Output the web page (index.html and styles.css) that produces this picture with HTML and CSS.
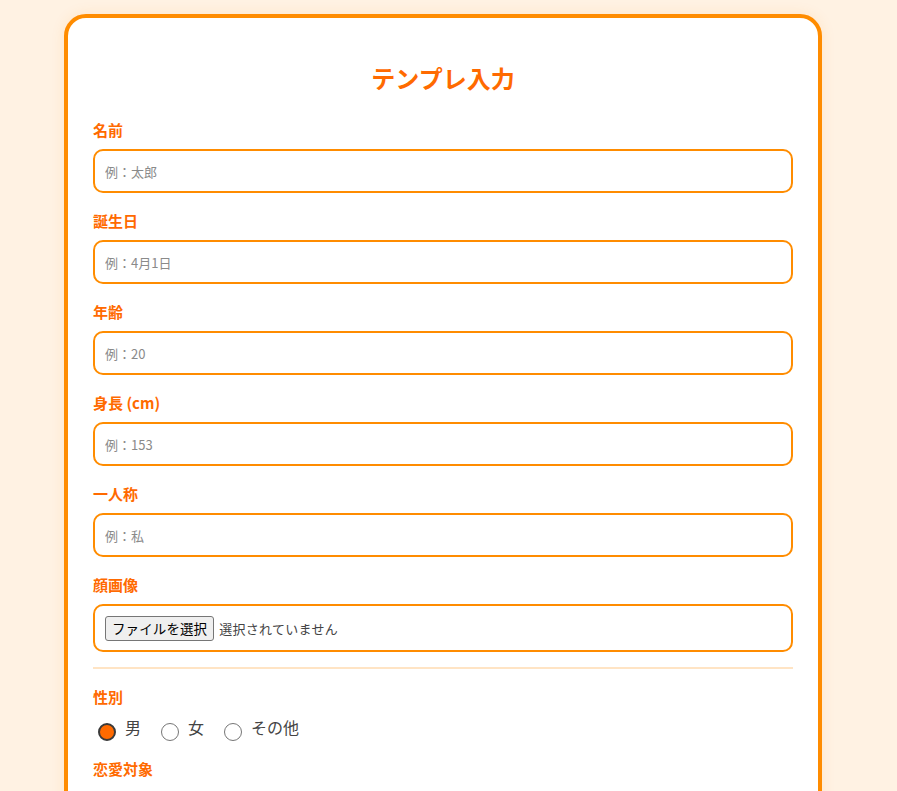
FILE: index.html
```html
<!DOCTYPE html>
<html lang="ja">
<head>
<meta charset="utf-8">
<title>テンプレ入力</title>
<link rel="stylesheet" href="styles.css">
</head>
<body>
<div class="card">
  <h1 class="title">テンプレ入力</h1>

  <div class="group">
    <label class="label" for="name">名前</label>
    <input class="field" id="name" type="text" placeholder="例：太郎">
  </div>
  <div class="group">
    <label class="label" for="birthday">誕生日</label>
    <input class="field" id="birthday" type="text" placeholder="例：4月1日">
  </div>
  <div class="group">
    <label class="label" for="age">年齢</label>
    <input class="field" id="age" type="text" placeholder="例：20">
  </div>
  <div class="group">
    <label class="label" for="height">身長 (cm)</label>
    <input class="field" id="height" type="text" placeholder="例：153">
  </div>
  <div class="group">
    <label class="label" for="first">一人称</label>
    <input class="field" id="first" type="text" placeholder="例：私">
  </div>
  <div class="group group-file">
    <span class="label">顔画像</span>
    <div class="file-box">
      <button class="file-btn" type="button">ファイルを選択</button>
      <span class="file-name">選択されていません</span>
    </div>
  </div>

  <div class="divider"></div>

  <div class="group">
    <span class="label">性別</span>
    <div class="radios">
      <label class="opt"><input class="radio" type="radio" name="sex" checked><span class="opt-text">男</span></label>
      <label class="opt"><input class="radio" type="radio" name="sex"><span class="opt-text">女</span></label>
      <label class="opt"><input class="radio" type="radio" name="sex"><span class="opt-text">その他</span></label>
    </div>
  </div>
  <div class="group group-last">
    <span class="label">恋愛対象</span>
  </div>
</div>
</body>
</html>
```

FILE: styles.css
```css
html::-webkit-scrollbar { width: 0; height: 0; display: none; }
html { scrollbar-width: none; }

body {
  margin: 0;
  background: #fff2e3;
  font-family: "Noto Sans CJK JP", "Noto Sans", sans-serif;
  color: #333;
}

.card {
  width: 700px;
  margin: 14px 0 0 64px;
  padding: 42px 25px 40px;
  background: #ffffff;
  border: 4px solid #ff8c00;
  border-radius: 22px;
  box-shadow: 0 0 14px rgba(255, 140, 0, 0.12);
}

.title {
  margin: 0 0 23px;
  font-size: 24px;
  line-height: 36px;
  font-weight: 700;
  color: #ff6a00;
  text-align: center;
}

.group {
  margin-bottom: 17px;
}

.label {
  display: block;
  margin-bottom: 8px;
  font-size: 15px;
  line-height: 22px;
  font-weight: 700;
  color: #ff6a00;
}

.field {
  display: block;
  box-sizing: border-box;
  width: 100%;
  height: 44px;
  margin: 0;
  padding: 0 10px;
  border: 2px solid #ff8c00;
  border-radius: 10px;
  background: #fff;
  font-family: "Noto Sans CJK JP", sans-serif;
  font-size: 13px;
  color: #333;
  outline: none;
}

.field::placeholder {
  color: #8a8a8a;
}

.group-file {
  margin-bottom: 15px;
}

.file-box {
  display: flex;
  align-items: center;
  box-sizing: border-box;
  height: 48px;
  padding: 0 10px;
  border: 2px solid #ff8c00;
  border-radius: 10px;
}

.file-btn {
  height: 25px;
  margin: 0;
  padding: 0 6px;
  border: 1px solid #767676;
  border-radius: 3px;
  background: #efefef;
  font-family: "Noto Sans CJK JP", sans-serif;
  font-size: 13.5px;
  line-height: 23px;
  letter-spacing: 0.1px;
  color: #000;
}

.file-name {
  margin-left: 5px;
  font-size: 13px;
  letter-spacing: 0.3px;
  color: #444;
}

.divider {
  height: 2px;
  margin: 0 0 17px;
  background: #ffe4c4;
}

.radios {
  display: flex;
  align-items: flex-start;
  margin-bottom: 3px;
}

.opt {
  display: flex;
  align-items: flex-start;
  margin-right: 15px;
}

.radio {
  appearance: none;
  -webkit-appearance: none;
  box-sizing: border-box;
  width: 18px;
  height: 18px;
  margin: 7px 9px 0 5px;
  border: 1.5px solid #767676;
  border-radius: 50%;
  background: #fff;
}

.radio:checked {
  border: 2.5px solid #3a3a3a;
  background: #ff6a00;
}

.opt-text {
  font-size: 16px;
  line-height: 22px;
  color: #444;
}
```
